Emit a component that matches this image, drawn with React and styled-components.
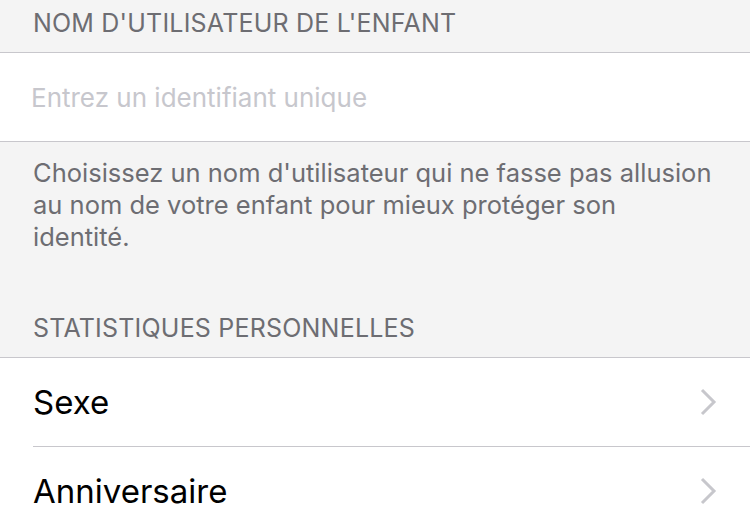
import React from "react";
import styled, { createGlobalStyle } from "styled-components";

const GlobalStyle = createGlobalStyle`
  html, body {
    margin: 0;
    padding: 0;
    background: #f4f4f4;
    font-family: Inter, "Noto Sans", sans-serif;
    -webkit-font-smoothing: antialiased;
  }
`;

function Chevron() {
  return (
    <svg width="19" height="28" viewBox="0 0 19 28">
      <path d="M3 2 L15 14 L3 26" fill="none" stroke="#c7c7cc" strokeWidth="3" />
    </svg>
  );
}

export default function App() {
  return (
    <Page>
      <GlobalStyle />
      <SectionHeader>NOM D'UTILISATEUR DE L'ENFANT</SectionHeader>
      <Group>
        <InputRow>
          <Input placeholder="Entrez un identifiant unique" />
        </InputRow>
      </Group>
      <SectionFooter>
        Choisissez un nom d'utilisateur qui ne fasse pas allusion au nom de
        votre enfant pour mieux protéger son identité.
      </SectionFooter>
      <SectionHeader>STATISTIQUES PERSONNELLES</SectionHeader>
      <Group>
        <Row>
          <Label>Sexe</Label>
          <Chevron />
        </Row>
        <Row last>
          <Label>Anniversaire</Label>
          <Chevron />
        </Row>
      </Group>
    </Page>
  );
}

const Page = styled.div`
  width: 750px;
  height: 525px;
  overflow: hidden;
  background: #f4f4f4;
`;

const SectionHeader = styled.div`
  height: 52px;
  box-sizing: border-box;
  padding: 0 33px 7px;
  display: flex;
  align-items: center;
  font-size: 25px;
  color: #6d6d72;
  letter-spacing: 0.2px;
`;

const Group = styled.div`
  background: #fff;
  border-top: 1px solid #c8c7cc;
  border-bottom: 1px solid #c8c7cc;
`;

const InputRow = styled.div`
  height: 88px;
  display: flex;
  align-items: center;
  padding: 0 31px;
`;

const Input = styled.input`
  border: none;
  outline: none;
  width: 100%;
  background: transparent;
  font-family: Inter, "Noto Sans", sans-serif;
  font-size: 26px;
  padding: 0;
  color: #000;
  &::placeholder {
    color: #c7c7cd;
  }
`;

const SectionFooter = styled.div`
  padding: 15px 33px 0;
  height: 163px;
  box-sizing: border-box;
  font-size: 25.5px;
  line-height: 32px;
  color: #6d6d72;
`;

const Row = styled.div`
  height: 88px;
  margin-left: 33px;
  padding-right: 32px;
  display: flex;
  align-items: center;
  justify-content: space-between;
  border-bottom: ${(p) => (p.last ? "none" : "1px solid #c8c7cc")};
`;

const Label = styled.span`
  font-size: 33px;
  color: #000;
`;
